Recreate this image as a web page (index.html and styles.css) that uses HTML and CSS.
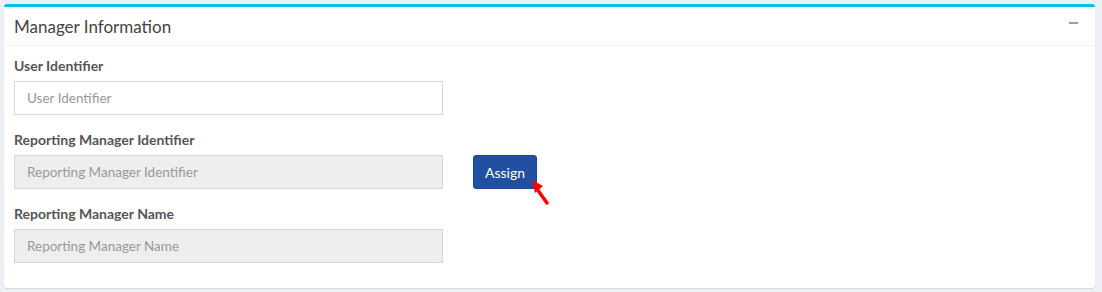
FILE: index.html
```html
<!DOCTYPE html>
<html>
<head>
<meta charset="utf-8">
<link rel="stylesheet" href="styles.css">
</head>
<body>
<div class="box">
  <div class="box-header">
    <h3 class="box-title">Manager Information</h3>
    <span class="collapse-btn"></span>
  </div>
  <div class="box-body">
    <div class="form-group">
      <label class="lbl">User Identifier</label>
      <input class="field" type="text" placeholder="User Identifier">
    </div>
    <div class="form-group">
      <label class="lbl">Reporting Manager Identifier</label>
      <div class="row">
        <input class="field" type="text" placeholder="Reporting Manager Identifier" disabled>
        <div class="btn-wrap">
          <button class="btn">Assign</button>
          <svg class="arrow" width="24" height="30" viewBox="0 0 24 30">
            <line x1="15" y1="24" x2="5" y2="10" stroke="#f00" stroke-width="3.5" stroke-linecap="round"/>
            <polygon points="0,1 11,7 3,14" fill="#f00"/>
          </svg>
        </div>
      </div>
    </div>
    <div class="form-group">
      <label class="lbl">Reporting Manager Name</label>
      <input class="field" type="text" placeholder="Reporting Manager Name" disabled>
    </div>
  </div>
</div>
</body>
</html>
```
FILE: styles.css
```css
html, body {
  margin: 0;
  padding: 0;
  background: #ecf0f5;
  font-family: "Lato", "Source Sans Pro", sans-serif;
}
body {
  padding: 4px 7px 3px 4px;
  height: 292px;
  box-sizing: border-box;
}
.box {
  width: 1091px;
  background: #fff;
  border-top: 3px solid #00c0ef;
  border-radius: 3px;
  box-shadow: 0 1px 1px rgba(0,0,0,0.1);
}
.box-header {
  height: 38px;
  border-bottom: 1px solid #f4f4f4;
  display: flex;
  align-items: center;
  justify-content: space-between;
  padding: 0 17px 0 10px;
}
.box-title {
  margin: 0;
  font-size: 17px;
  font-weight: 400;
  color: #444;
  line-height: 1;
}
.collapse-btn {
  display: block;
  width: 9px;
  height: 2px;
  background: #97a0b3;
  margin-top: -6px;
}
.box-body {
  padding: 10px;
}
.form-group {
  margin-bottom: 15px;
}
.lbl {
  display: block;
  font-size: 14px;
  font-weight: 700;
  color: #555;
  line-height: 20px;
  margin-bottom: 5px;
}
.row {
  display: flex;
  align-items: flex-start;
}
.field {
  display: block;
  width: 429px;
  height: 34px;
  box-sizing: border-box;
  border: 1px solid #d2d6de;
  border-radius: 0;
  padding: 6px 12px;
  font-family: inherit;
  font-size: 13.5px;
  color: #555;
  background: #fff;
  outline: none;
}
.field::placeholder {
  color: #999;
}
.field:disabled {
  background: #eee;
}
.btn-wrap {
  position: relative;
  margin-left: 30px;
}
.btn {
  height: 34px;
  width: 64px;
  background: #2150a1;
  color: #fff;
  border: 1px solid #1c4690;
  border-radius: 3px;
  font-family: inherit;
  font-size: 14px;
  padding: 0;
}
.arrow {
  position: absolute;
  left: 59px;
  top: 24px;
}
```
